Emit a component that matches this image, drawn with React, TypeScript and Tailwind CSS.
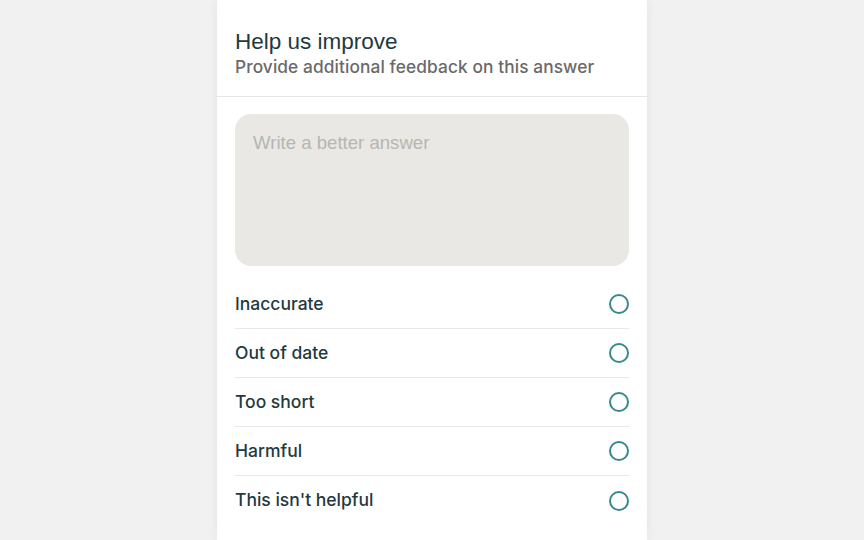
const reasons = ['Inaccurate', 'Out of date', 'Too short', 'Harmful', "This isn't helpful"];

export default function App() {
  return (
    <div
      className="min-h-[540px] w-full bg-[#f1f1f1] flex justify-center"
      style={{ fontFamily: '"Liberation Sans", Arial, sans-serif' }}
    >
      <div className="w-[430px] min-h-[540px] bg-white shadow-[0_0_12px_rgba(0,0,0,0.06)]">
        <div className="px-[18px] pt-[28px] pb-[18px] border-b border-[#e6e6e6]">
          <h1 className="text-[22.5px] leading-[28px] text-[#1f3a40]">Help us improve</h1>
          <p className="font-['Inter',sans-serif] text-[17.3px] leading-[22px] font-medium tracking-[0.1px] text-[#6a6a6a]">
            Provide additional feedback on this answer
          </p>
        </div>
        <div className="px-[18px] pt-[17px]">
          <textarea
            placeholder="Write a better answer"
            className="block w-full h-[152px] resize-none rounded-[16px] bg-[#e9e8e4] px-[18px] py-[17px] text-[18.6px] leading-[24px] text-[#1f3a40] placeholder:text-[#b6b6b2] outline-none"
          />
          <ul className="mt-[14px]">
            {reasons.map((r, i) => (
              <li
                key={r}
                className={`flex items-center justify-between h-[49px] ${
                  i < reasons.length - 1 ? 'border-b border-[#e8e8e8]' : ''
                }`}
              >
                <span className="font-['Inter',sans-serif] text-[17.5px] font-medium text-[#1f3a40]">{r}</span>
                <span className="w-[20px] h-[20px] rounded-full border-2 border-[#37898d]" />
              </li>
            ))}
          </ul>
        </div>
      </div>
    </div>
  );
}
